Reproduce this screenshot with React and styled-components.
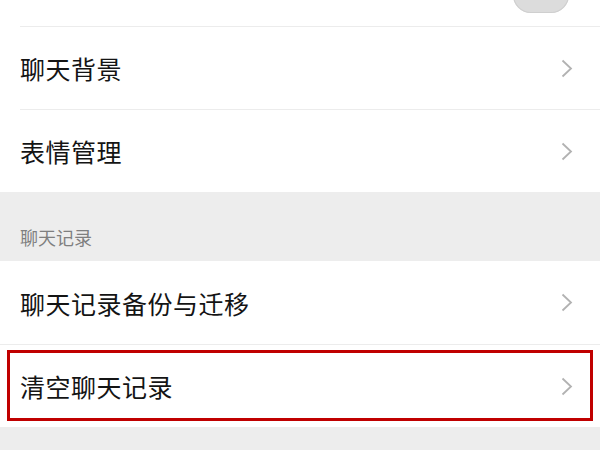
import React from "react";
import styled, { createGlobalStyle } from "styled-components";

const GlobalStyle = createGlobalStyle`
  html, body {
    margin: 0;
    padding: 0;
    background: #ededed;
    overflow: hidden;
  }
  body {
    font-family: "Noto Sans CJK SC", "Noto Sans", sans-serif;
  }
`;

const Page = styled.div`
  width: 600px;
  height: 450px;
  overflow: hidden;
  background: #ededed;
`;

const Group = styled.div`
  background: #ffffff;
  margin-top: ${(p) => p.$offset || 0}px;
`;

const Row = styled.div`
  position: relative;
  height: 83px;
  display: flex;
  align-items: center;
  justify-content: space-between;
  padding: 0 27px 0 20px;
  box-sizing: border-box;

  & + & {
    border-top: 1px solid #ececec;
  }
  & + &::before {
    content: "";
    position: absolute;
    left: 0;
    top: -1px;
    width: 20px;
    height: 1px;
    background: #ffffff;
  }

  ${(p) =>
    p.$highlight &&
    `
    &::after {
      content: "";
      position: absolute;
      left: 7px;
      right: 7px;
      top: 5px;
      bottom: 6px;
      border: 3px solid #c00000;
      pointer-events: none;
    }
  `}
`;

const Title = styled.span`
  font-size: 25px;
  color: #141414;
  letter-spacing: 0.5px;
`;

const SectionLabel = styled.div`
  height: 69px;
  box-sizing: border-box;
  padding: 0 20px 11px;
  display: flex;
  align-items: flex-end;
  font-size: 18px;
  color: #7f7f7f;
`;

const Switch = styled.div`
  width: 56px;
  height: 36px;
  margin-top: 21px;
  margin-right: 4px;
  border-radius: 18px;
  background: #dcdcdc;
  box-shadow: inset 0 0 0 1px #cfcfcf;
`;

const Chevron = () => (
  <svg width="12" height="19" viewBox="0 0 12 19" fill="none">
    <path d="M1.5 1.5 L10 9.5 L1.5 17.5" stroke="#b2b2b2" strokeWidth="1.8" />
  </svg>
);

const BottomSpace = styled.div`
  height: 40px;
  background: #ededed;
`;

function App() {
  return (
    <Page>
      <GlobalStyle />
      <Group $offset={-57}>
        <Row>
          <Title>置顶聊天</Title>
          <Switch />
        </Row>
        <Row>
          <Title>聊天背景</Title>
          <Chevron />
        </Row>
        <Row>
          <Title>表情管理</Title>
          <Chevron />
        </Row>
      </Group>
      <SectionLabel>聊天记录</SectionLabel>
      <Group>
        <Row>
          <Title>聊天记录备份与迁移</Title>
          <Chevron />
        </Row>
        <Row $highlight>
          <Title>清空聊天记录</Title>
          <Chevron />
        </Row>
      </Group>
      <BottomSpace />
    </Page>
  );
}

export default App;
